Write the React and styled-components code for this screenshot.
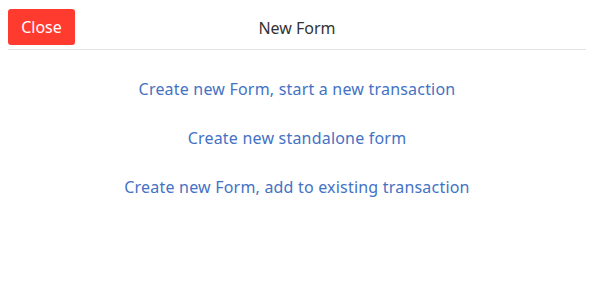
import React from 'react';
import styled, { createGlobalStyle } from 'styled-components';

const Global = createGlobalStyle`
  html, body { margin: 0; padding: 0; background: #fff; }
  body { font-family: "Noto Sans", "Open Sans", sans-serif; }
`;

const Page = styled.div`
  width: 596px;
  height: 305px;
  box-sizing: border-box;
  padding: 0 10px 0 8px;
  background: #fff;
`;

const Header = styled.header`
  display: grid;
  grid-template-columns: 1fr auto 1fr;
  align-items: center;
  height: 50px;
  box-sizing: border-box;
  padding: 9px 0 4px;
  border-bottom: 1px solid #e3e3e3;
`;

const CloseButton = styled.button`
  justify-self: start;
  width: 67px;
  height: 36px;
  padding: 0;
  border: none;
  border-radius: 3px;
  background: #ff3b30;
  color: #fff;
  font: 16px "Noto Sans", sans-serif;
  cursor: pointer;
`;

const Title = styled.h1`
  margin: 0;
  font: 400 16px/20px "Noto Sans", sans-serif;
  color: #333;
  padding-top: 1px;
`;

const Options = styled.nav`
  display: flex;
  flex-direction: column;
  align-items: center;
  padding-top: 15px;
`;

const OptionLink = styled.a`
  display: block;
  line-height: 49px;
  font-size: 16px;
  letter-spacing: 0.2px;
  color: #4472c4;
  text-decoration: none;
  cursor: pointer;
`;

const options = [
  'Create new Form, start a new transaction',
  'Create new standalone form',
  'Create new Form, add to existing transaction',
];

export default function App() {
  return (
    <>
      <Global />
      <Page>
        <Header>
          <CloseButton>Close</CloseButton>
          <Title>New Form</Title>
          <span />
        </Header>
        <Options>
          {options.map((o) => (
            <OptionLink key={o}>{o}</OptionLink>
          ))}
        </Options>
      </Page>
    </>
  );
}
